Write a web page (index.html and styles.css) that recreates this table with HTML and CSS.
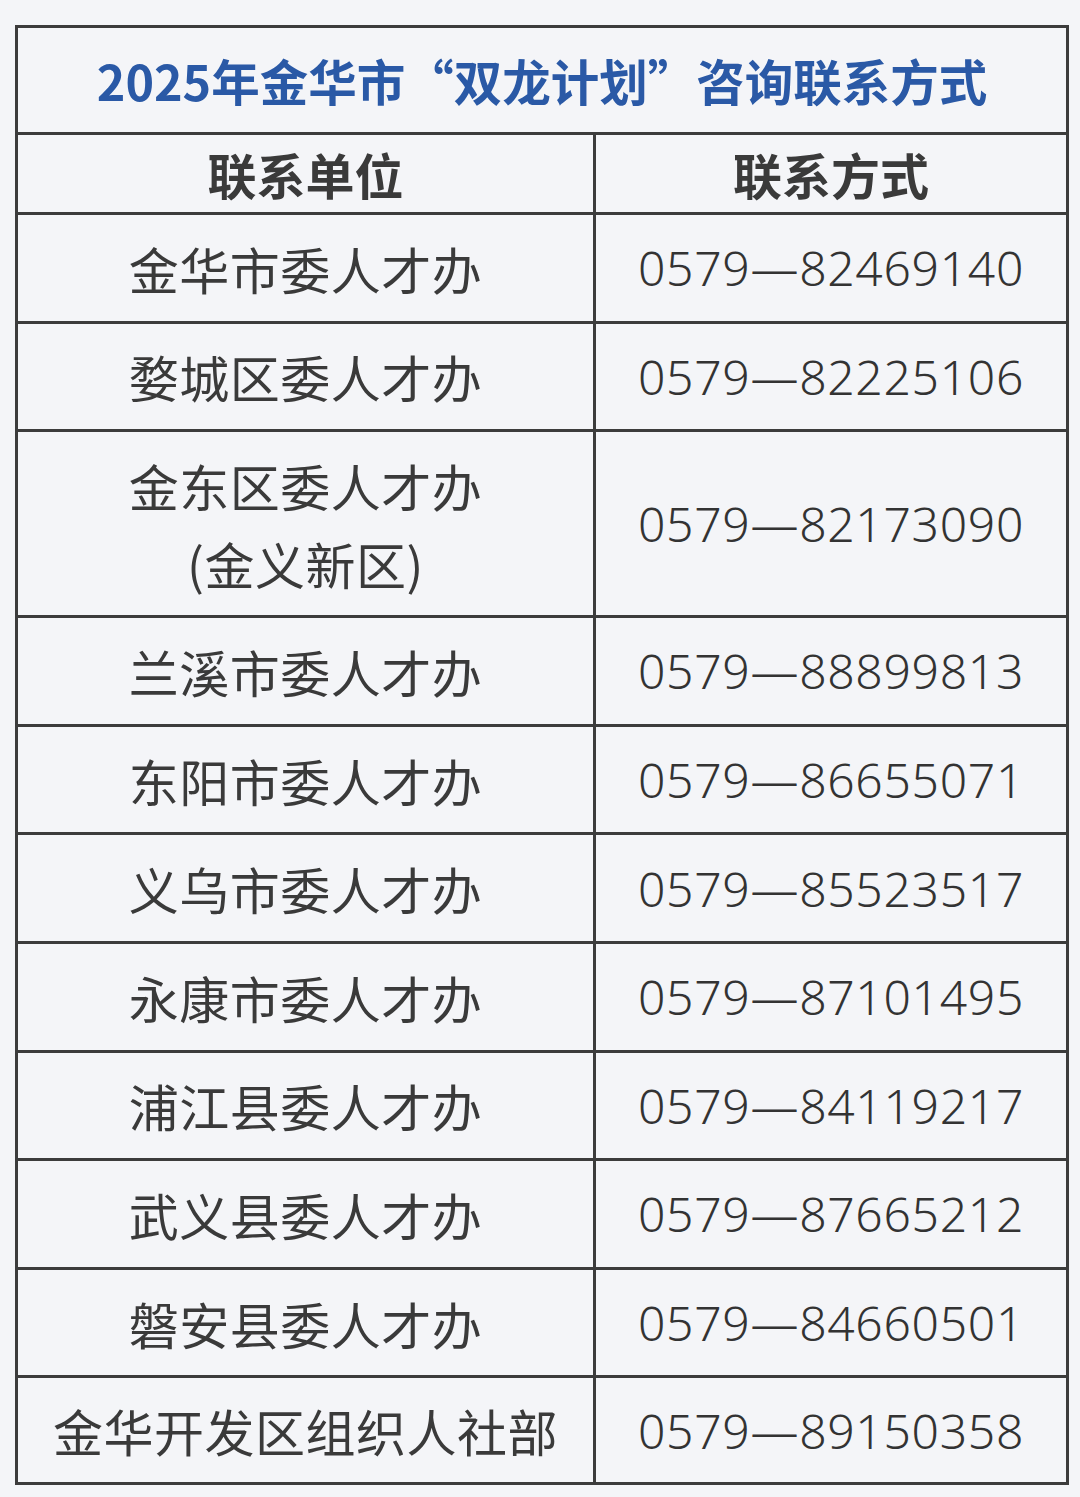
FILE: index.html
```html
<!DOCTYPE html>
<html lang="zh-CN">
<head>
<meta charset="utf-8">
<title>2025年金华市“双龙计划”咨询联系方式</title>
<link rel="stylesheet" href="styles.css">
</head>
<body>
<table class="contacts">
  <colgroup><col class="col-unit"><col class="col-phone"></colgroup>
  <thead>
    <tr class="row-title"><th colspan="2" class="title">2025年金华市“双龙计划”咨询联系方式</th></tr>
    <tr class="row-head"><th>联系单位</th><th>联系方式</th></tr>
  </thead>
  <tbody>
    <tr class="row"><td class="unit">金华市委人才办</td><td class="phone">0579—82469140</td></tr>
    <tr class="row"><td class="unit">婺城区委人才办</td><td class="phone">0579—82225106</td></tr>
    <tr class="row row-tall"><td class="unit">金东区委人才办<br>(金义新区)</td><td class="phone">0579—82173090</td></tr>
    <tr class="row"><td class="unit">兰溪市委人才办</td><td class="phone">0579—88899813</td></tr>
    <tr class="row"><td class="unit">东阳市委人才办</td><td class="phone">0579—86655071</td></tr>
    <tr class="row"><td class="unit">义乌市委人才办</td><td class="phone">0579—85523517</td></tr>
    <tr class="row"><td class="unit">永康市委人才办</td><td class="phone">0579—87101495</td></tr>
    <tr class="row"><td class="unit">浦江县委人才办</td><td class="phone">0579—84119217</td></tr>
    <tr class="row"><td class="unit">武义县委人才办</td><td class="phone">0579—87665212</td></tr>
    <tr class="row"><td class="unit">磐安县委人才办</td><td class="phone">0579—84660501</td></tr>
    <tr class="row row-last"><td class="unit">金华开发区组织人社部</td><td class="phone">0579—89150358</td></tr>
  </tbody>
</table>
</body>
</html>
```
FILE: styles.css
```css
html, body {
  margin: 0;
  padding: 0;
  background: #f4f5f8;
}
body {
  padding: 25px 0 0 15px;
  font-family: "Noto Sans CJK SC", "Noto Sans", sans-serif;
  color: #3a3a3a;
}
.contacts {
  border-collapse: collapse;
  width: 1051px;
  table-layout: fixed;
}
.col-unit { width: 578px; }
.col-phone { width: 473px; }
.contacts th,
.contacts td {
  border: 3px solid #3c3c3c;
  padding: 0;
  text-align: center;
  vertical-align: middle;
}
.row-title { height: 107px; }
.title {
  font-size: 48.5px;
  font-weight: 700;
  color: #2a59a6;
  padding-bottom: 3px;
}
.row-head { height: 80px; }
.row-head th {
  font-size: 49px;
  font-weight: 700;
  color: #3a3a3a;
}
.row { height: 108.6px; }
.row-tall { height: 186px; }
.row-last { height: 107px; }
.unit {
  font-size: 50px;
  font-weight: 400;
  line-height: 78px;
  letter-spacing: 0.5px;
}
.phone {
  font-family: "Noto Sans", sans-serif;
  font-size: 48px;
  font-weight: 350;
  color: #333333;
  letter-spacing: 0.7px;
}
```
